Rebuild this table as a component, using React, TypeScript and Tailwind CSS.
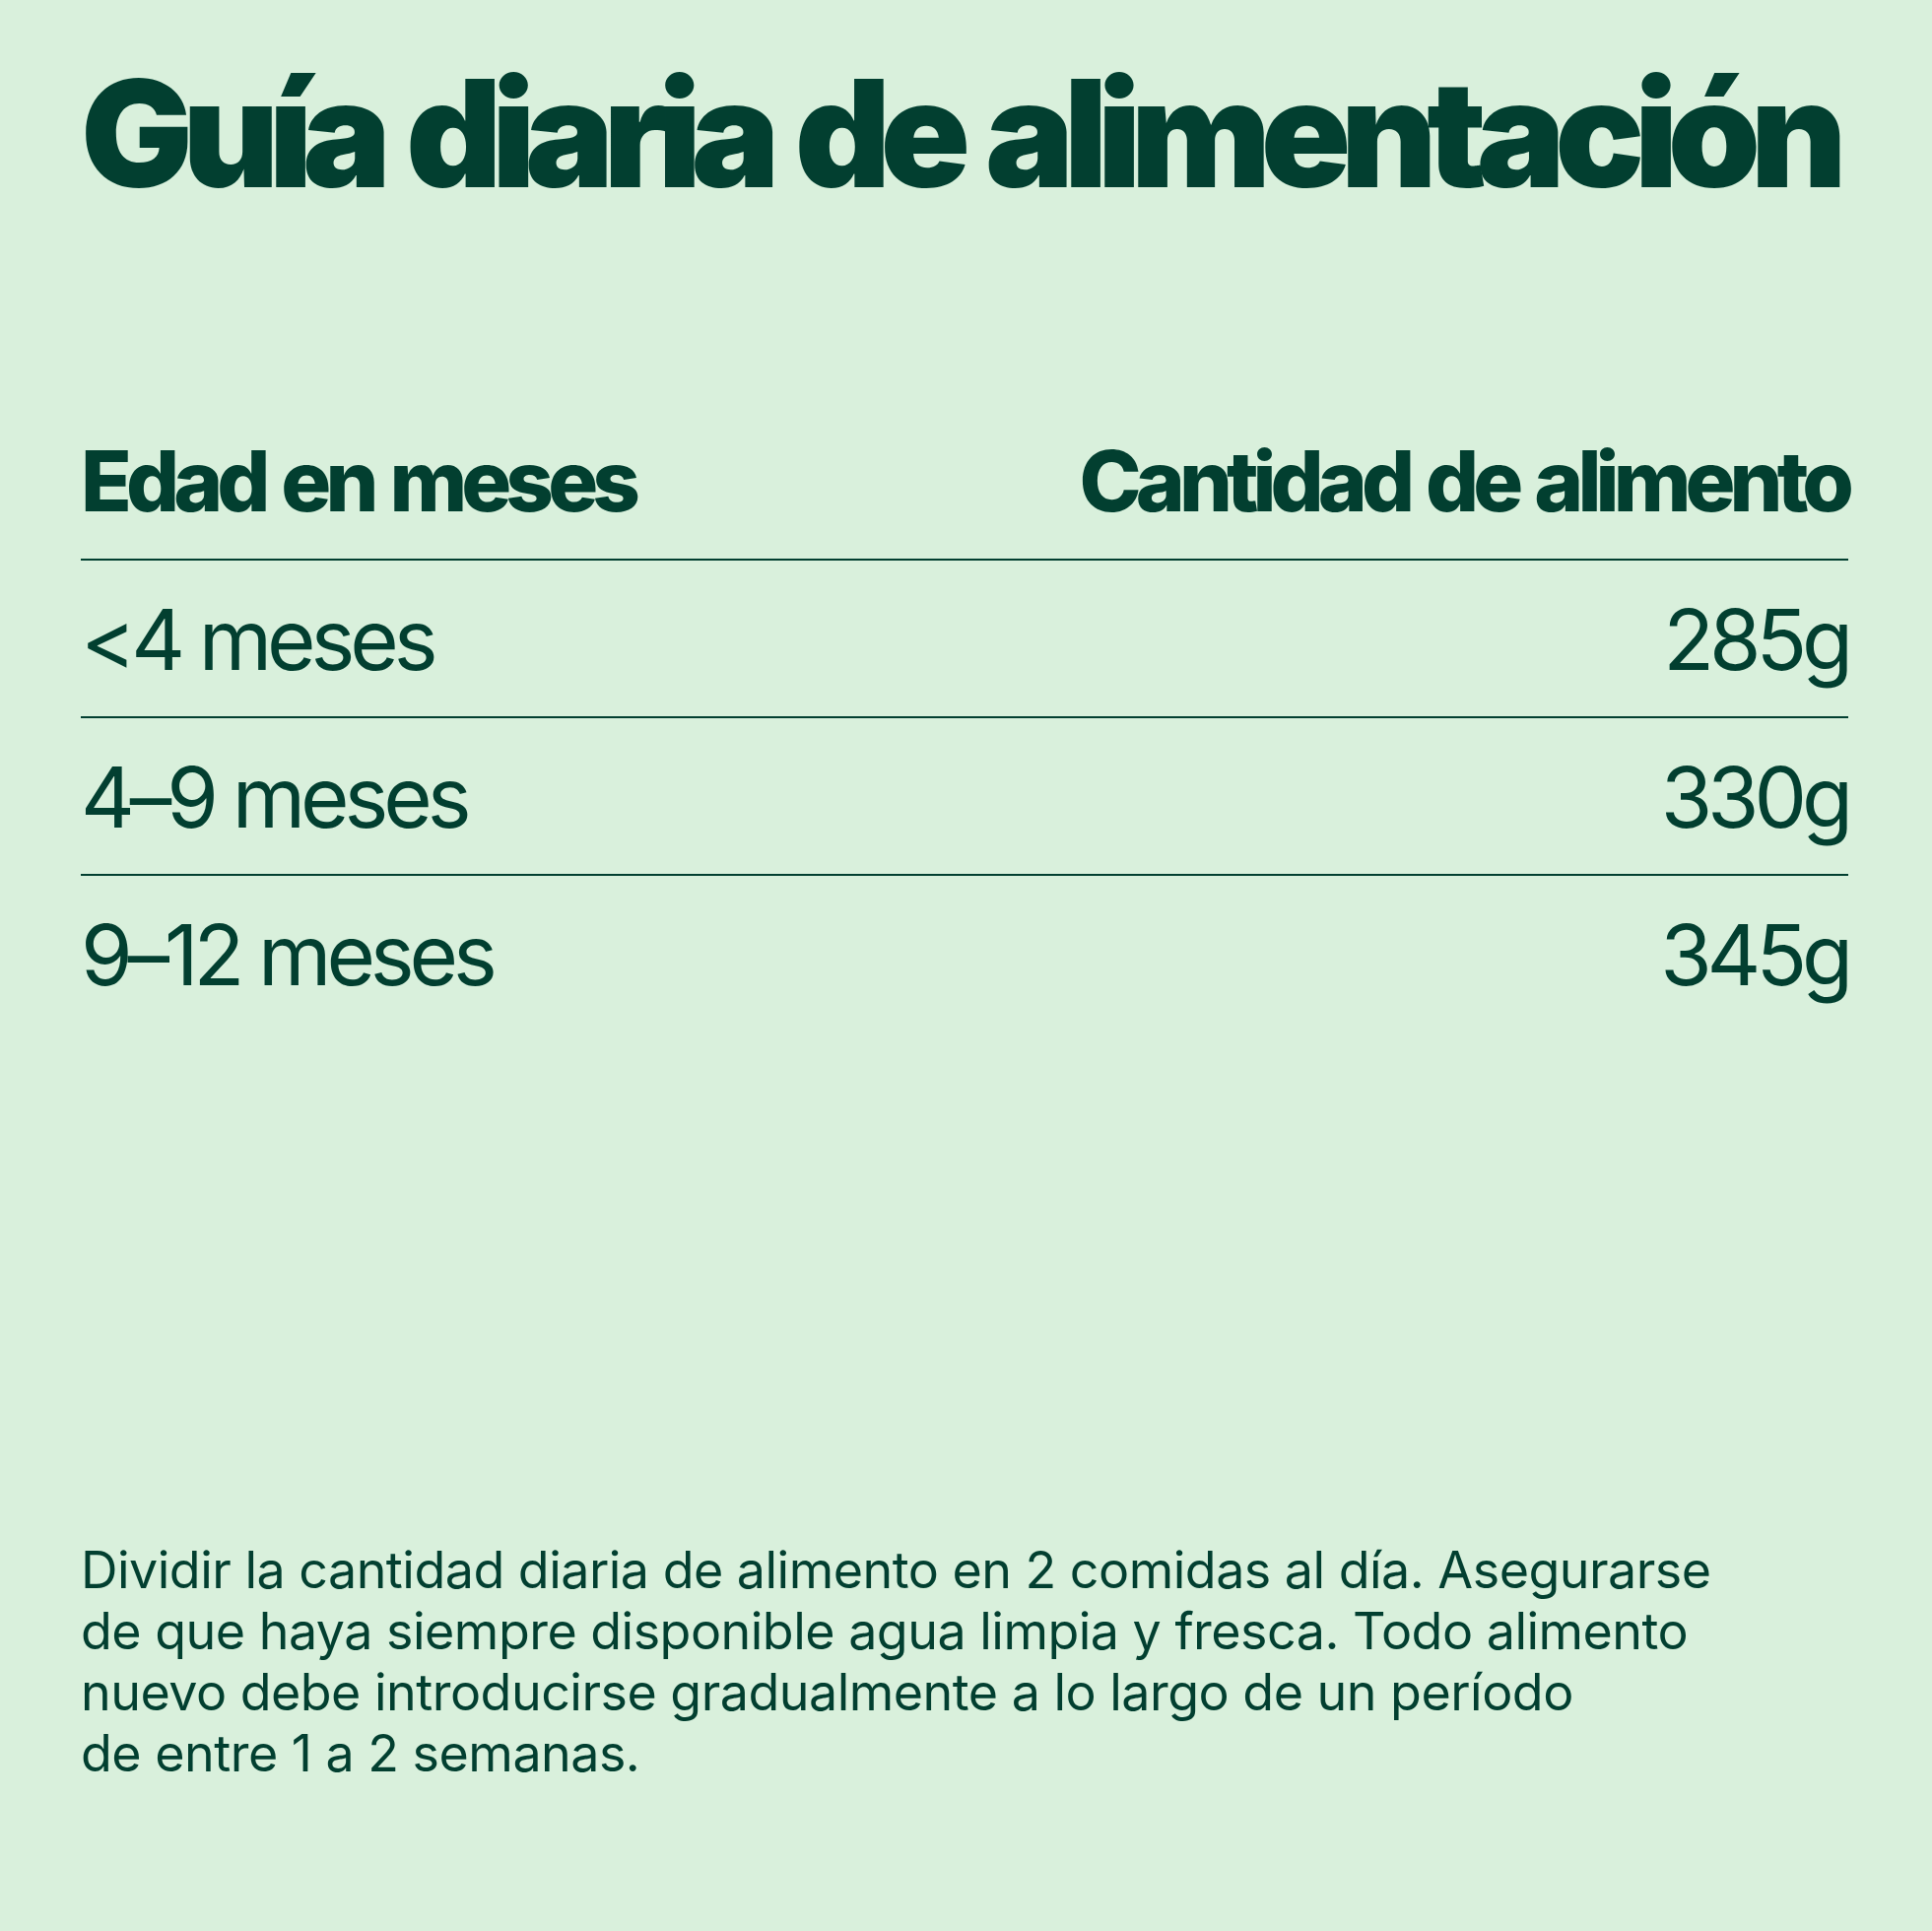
export default function App() {
  const rows = [
    { age: '<4 meses', amount: '285g' },
    { age: '4–9 meses', amount: '330g' },
    { age: '9–12 meses', amount: '345g' },
  ];

  return (
    <div
      className="min-h-[1960px] w-full bg-[#d9f0dc] text-[#023f30] px-[82px] pt-[60px]"
      style={{ fontFamily: 'Inter, "Noto Sans", sans-serif' }}
    >
      <h1 className="whitespace-nowrap text-[151px] leading-none font-black tracking-[-0.07em] [word-spacing:0.04em]">
        Guía diaria de alimentación
      </h1>

      <div className="mt-[235px] w-[1794px]">
        <div className="flex items-end justify-between pb-[36px] text-[85px] leading-none font-extrabold tracking-[-0.07em] [word-spacing:0.05em]">
          <span>Edad en meses</span>
          <span>Cantidad de alimento</span>
        </div>
        {rows.map((r) => (
          <div
            key={r.age}
            className="flex h-[160px] items-center justify-between border-t-2 border-[#023f30] pt-[2px] text-[85px] leading-none tracking-[-0.06em]"
          >
            <span>{r.age}</span>
            <span>{r.amount}</span>
          </div>
        ))}
      </div>

      <p className="mt-[516px] max-w-[1700px] text-[52px] leading-[62px] tracking-[-0.01em]">
        Dividir la cantidad diaria de alimento en 2 comidas al día. Asegurarse
        <br />
        de que haya siempre disponible agua limpia y fresca. Todo alimento
        <br />
        nuevo debe introducirse gradualmente a lo largo de un período
        <br />
        de entre 1 a 2 semanas.
      </p>
    </div>
  );
}
